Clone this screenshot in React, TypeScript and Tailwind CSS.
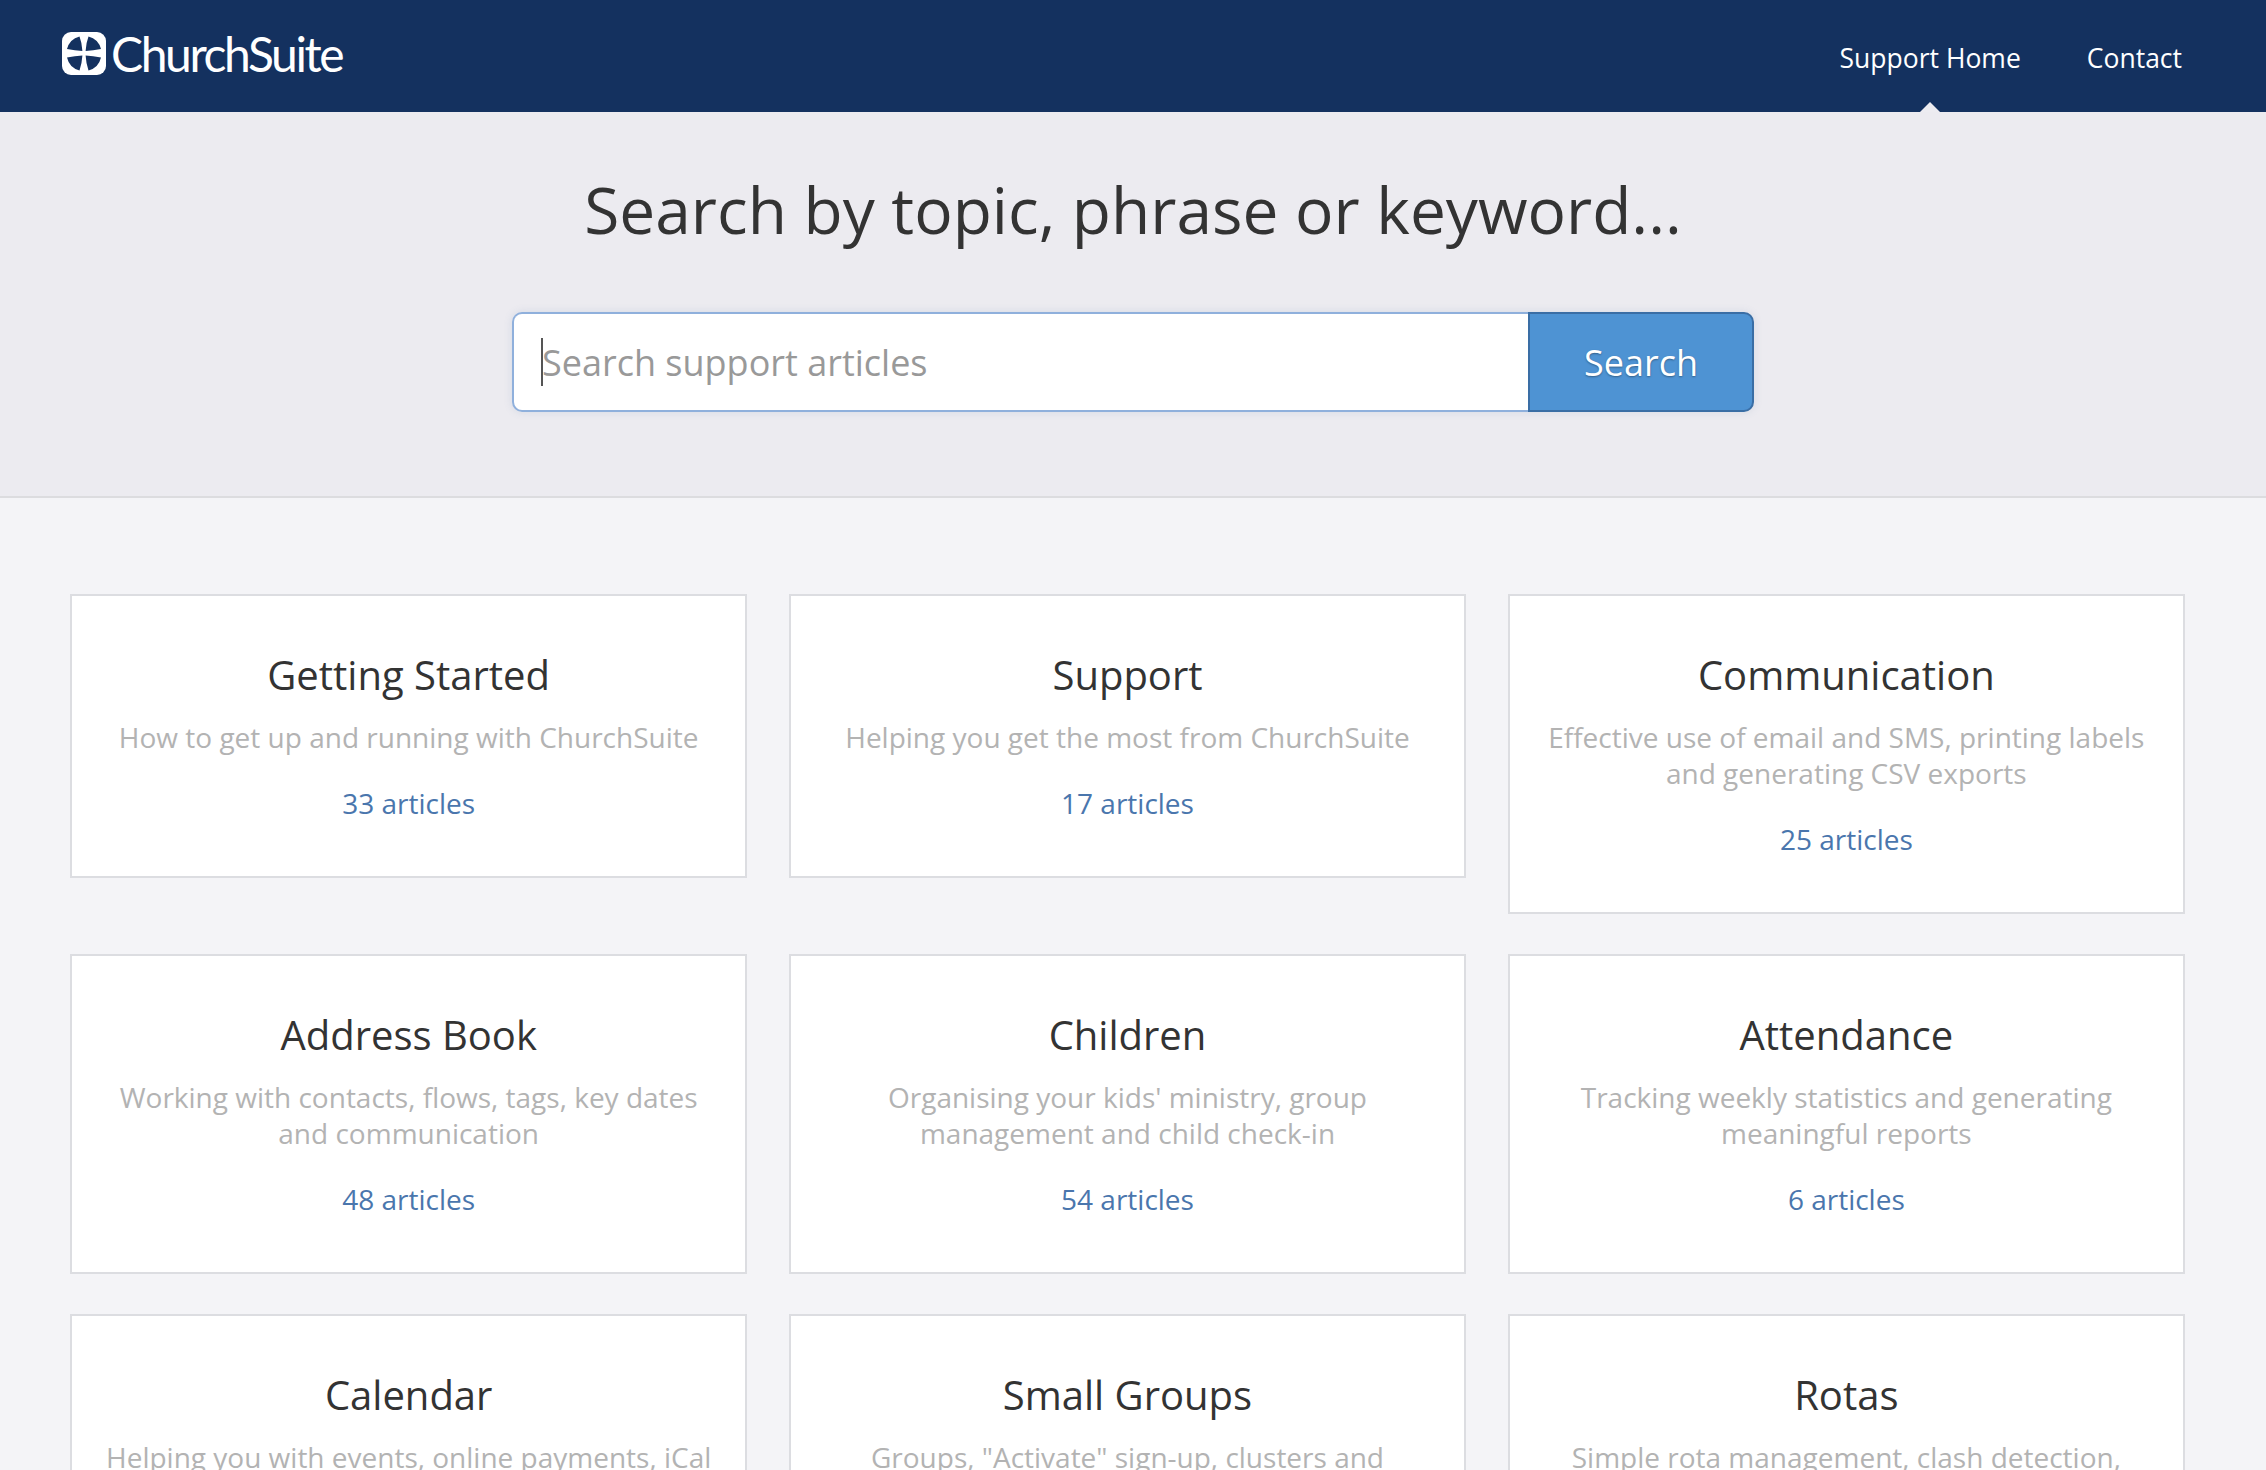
const fontStack = "font-['Open_Sans','Noto_Sans',sans-serif]";

const categories = [
  { title: 'Getting Started', text: 'How to get up and running with ChurchSuite', count: '33 articles' },
  { title: 'Support', text: 'Helping you get the most from ChurchSuite', count: '17 articles' },
  { title: 'Communication', text: 'Effective use of email and SMS, printing labels and generating CSV exports', count: '25 articles' },
  { title: 'Address Book', text: 'Working with contacts, flows, tags, key dates and communication', count: '48 articles' },
  { title: 'Children', text: "Organising your kids' ministry, group management and child check-in", count: '54 articles' },
  { title: 'Attendance', text: 'Tracking weekly statistics and generating meaningful reports', count: '6 articles' },
  { title: 'Calendar', text: 'Helping you with events, online payments, iCal feeds and embedding', count: '30 articles' },
  { title: 'Small Groups', text: 'Groups, "Activate" sign-up, clusters and attendance tracking', count: '20 articles' },
  { title: 'Rotas', text: 'Simple rota management, clash detection, reminders and more', count: '12 articles' },
];

function Logo() {
  return (
    <div className="flex items-center gap-[5px] pb-[5px]">
      <svg width="44" height="43" viewBox="0 0 44 43">
        <rect width="44" height="43" rx="9" fill="#fff" />
        <path
          d="M17.5 4.5 A17.5 17.5 0 0 0 5 17 Q13 18.6 20.4 19 Q20 11 17.5 4.5 Z M26.5 4.5 A17.5 17.5 0 0 1 39 17 Q31 18.6 23.6 19 Q24 11 26.5 4.5 Z M5 25.5 A17.5 17.5 0 0 0 17.5 38.5 Q20 31 20.4 23.5 Q13 24 5 25.5 Z M39 25.5 A17.5 17.5 0 0 1 26.5 38.5 Q24 31 23.6 23.5 Q31 24 39 25.5 Z"
          fill="#14315f"
        />
      </svg>
      <span className="font-['Lato',sans-serif] text-[48px] leading-none tracking-[-2.4px] text-white">ChurchSuite</span>
    </div>
  );
}

function CategoryCard({ title, text, count }: { title: string; text: string; count: string }) {
  return (
    <a className="block border-2 border-[#dcdde1] bg-white px-[30px] pt-[51px] pb-[55px] text-center">
      <h2 className="text-[40px] leading-[56px] text-[#333]">{title}</h2>
      <p className="mt-[16px] text-[28px] leading-[36px] text-[#b3b3b3]">{text}</p>
      <p className="mt-[30px] text-[28px] leading-[36px] text-[#4a76ad]">{count}</p>
    </a>
  );
}

export default function App() {
  return (
    <div className={`h-[1470px] overflow-hidden bg-[#f4f4f7] ${fontStack}`}>
      <header className="flex h-[112px] items-center justify-between bg-[#14315f] pr-[84px] pl-[62px]">
        <Logo />
        <nav className="flex items-center gap-[66px] pt-[6px] text-[26.5px] text-white">
          <a className="relative">
            Support Home
            <span className="absolute top-[63px] left-1/2 size-0 -translate-x-1/2 border-x-[10px] border-b-[10px] border-x-transparent border-b-[#edecf1]" />
          </a>
          <a>Contact</a>
        </nav>
      </header>

      <section className="flex h-[386px] flex-col items-center border-b-2 border-[#dcdcdf] bg-[#ecebf0] pt-[51px]">
        <h1 className="text-[64px] leading-[94px] text-[#333]">Search by topic, phrase or keyword...</h1>
        <form className="mt-[55px] flex h-[100px] w-[1242px] rounded-[10px] shadow-[0_0_8px_rgba(90,120,170,0.15)]">
          <div className="relative flex-1">
            <input
              placeholder="Search support articles"
              className="h-full w-full rounded-l-[10px] border-2 border-r-0 border-[#8fb0dc] bg-white pl-[28px] text-[36px] text-[#333] outline-none placeholder:text-[#999]"
            />
            <span className="absolute top-[26px] left-[29px] h-[48px] w-[2px] bg-[#555]" />
          </div>
          <button className="w-[226px] rounded-r-[10px] border-2 border-[#3a6ea5] bg-[#4e93d3] pt-[2px] text-[36px] text-white [text-shadow:0_1px_2px_rgba(0,0,0,0.35)]">
            Search
          </button>
        </form>
      </section>

      <main className="grid grid-cols-3 items-start gap-x-[41.5px] gap-y-[40px] pt-[96px] pr-[81px] pl-[70px]">
        {categories.map((c) => (
          <CategoryCard key={c.title} {...c} />
        ))}
      </main>
    </div>
  );
}
